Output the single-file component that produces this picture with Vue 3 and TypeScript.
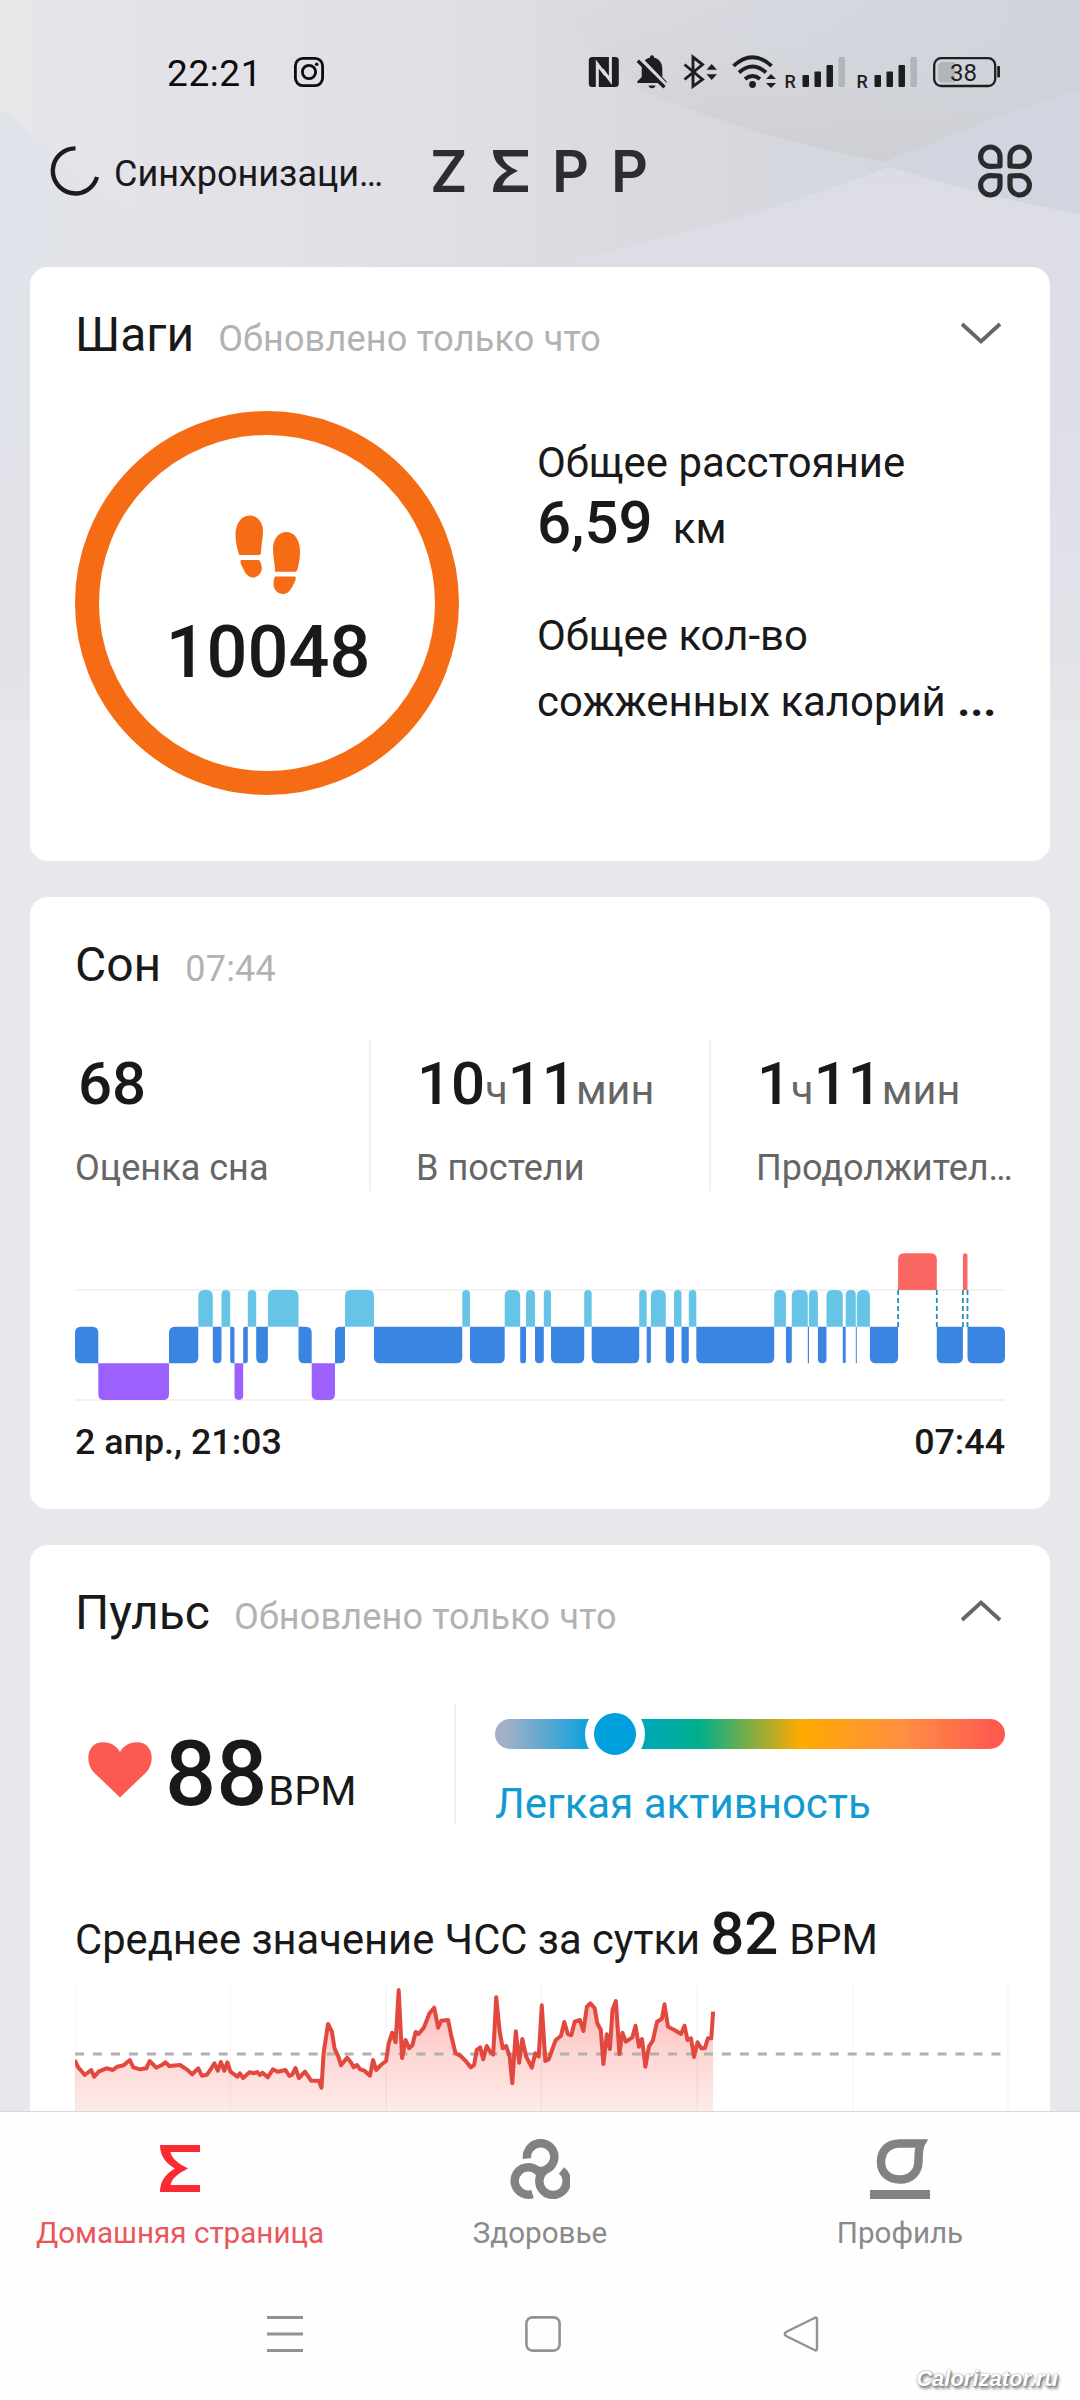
<script setup lang="ts">
type Stage = 'awake' | 'rem' | 'light' | 'deep'

interface Segment {
  stage: Stage
  end: number
}

const stageOrder: Stage[] = ['awake', 'rem', 'light', 'deep']
const stageColor: Record<Stage, string> = {
  awake: '#fb6762',
  rem: '#66c5e7',
  light: '#3b85e2',
  deep: '#9b60fe',
}

const sleep: Segment[] = [
  { stage: 'light', end: 98.3 }, { stage: 'deep', end: 169 }, { stage: 'light', end: 198.3 },
  { stage: 'rem', end: 212.8 }, { stage: 'light', end: 221.5 }, { stage: 'rem', end: 230.2 },
  { stage: 'light', end: 234.5 }, { stage: 'deep', end: 243.2 }, { stage: 'light', end: 247.8 },
  { stage: 'rem', end: 256.2 }, { stage: 'light', end: 267.9 }, { stage: 'rem', end: 298.5 },
  { stage: 'light', end: 311.7 }, { stage: 'deep', end: 335 }, { stage: 'light', end: 345 },
  { stage: 'rem', end: 374 }, { stage: 'light', end: 462.3 }, { stage: 'rem', end: 470 },
  { stage: 'light', end: 504.7 }, { stage: 'rem', end: 520.2 }, { stage: 'light', end: 526 },
  { stage: 'rem', end: 535 }, { stage: 'light', end: 543.8 }, { stage: 'rem', end: 551 },
  { stage: 'light', end: 584.2 }, { stage: 'rem', end: 591.7 }, { stage: 'light', end: 639.2 },
  { stage: 'rem', end: 646.7 }, { stage: 'light', end: 650.9 }, { stage: 'rem', end: 665.8 },
  { stage: 'light', end: 674 }, { stage: 'rem', end: 681.5 }, { stage: 'light', end: 688.8 },
  { stage: 'rem', end: 696.3 }, { stage: 'light', end: 774.2 }, { stage: 'rem', end: 785.9 },
  { stage: 'light', end: 791.8 }, { stage: 'rem', end: 807.8 }, { stage: 'light', end: 809 },
  { stage: 'rem', end: 817.9 }, { stage: 'light', end: 826.5 }, { stage: 'rem', end: 842.8 },
  { stage: 'light', end: 845.7 }, { stage: 'rem', end: 855.8 }, { stage: 'light', end: 856.8 },
  { stage: 'rem', end: 869.9 }, { stage: 'light', end: 898.1 }, { stage: 'awake', end: 936.8 },
  { stage: 'light', end: 962.9 }, { stage: 'awake', end: 967.5 }, { stage: 'light', end: 1005 },
]

const rowH = 110 / 3

/* A corner stays square where the neighbouring block touches it. */
const blocks = sleep.map((s, i) => {
  const x0 = i ? sleep[i - 1].end : 75
  const x1 = s.end
  const row = stageOrder.indexOf(s.stage)
  const prev = i ? stageOrder.indexOf(sleep[i - 1].stage) : row
  const next = i < sleep.length - 1 ? stageOrder.indexOf(sleep[i + 1].stage) : row
  const r = Math.min(6, (x1 - x0) / 2)
  const tl = prev < row ? 0 : r
  const bl = prev > row ? 0 : r
  const tr = next < row ? 0 : r
  const br = next > row ? 0 : r
  const y0 = 1253.3 + row * rowH
  const y1 = y0 + rowH
  const d =
    `M${x0 + tl} ${y0}H${x1 - tr}Q${x1} ${y0} ${x1} ${y0 + tr}V${y1 - br}` +
    `Q${x1} ${y1} ${x1 - br} ${y1}H${x0 + bl}Q${x0} ${y1} ${x0} ${y1 - bl}V${y0 + tl}` +
    `Q${x0} ${y0} ${x0 + tl} ${y0}Z`
  return { d, fill: stageColor[s.stage] }
})

const jumps = [898.1, 936.8, 962.9, 967.5]

const samples = [
  57, 300, 65, 322, 80, 345, 95, 330, 102, 350, 112, 335, 130, 325, 145, 330, 155, 320, 170, 316, 184, 300, 192, 322,
  208, 328, 222, 325, 230, 303, 245, 323, 258, 315, 266, 307, 275, 318, 300, 315, 315, 328, 328, 343, 342, 325, 350, 347,
  362, 344, 372, 325, 379, 310, 387, 332, 394, 306, 402, 332, 409, 307, 416, 335, 432, 350, 438, 340, 445, 354, 460, 337,
  470, 340, 478, 336, 484, 345, 490, 338, 502, 352, 514, 328, 525, 335, 543, 330, 552, 348, 558, 345, 566, 324, 574, 354,
  588, 335, 602, 362, 620, 362, 626, 383, 631, 280, 641, 192, 650, 215, 656, 265, 665, 290, 671, 316, 685, 293, 693, 305,
  700, 322, 708, 315, 715, 328, 725, 332, 738, 347, 745, 300, 752, 330, 763, 315, 775, 303, 781, 250, 789, 218, 797, 247,
  804, 90, 812, 294, 820, 240, 828, 265, 836, 255, 843, 216, 850, 222, 862, 203, 875, 160, 886, 143, 895, 203, 902, 182,
  918, 180, 925, 225, 935, 280, 947, 288, 960, 305, 970, 322, 978, 315, 984, 270, 992, 262, 999, 298, 1007, 258, 1015, 275,
  1022, 284, 1029, 112, 1037, 215, 1044, 265, 1052, 258, 1060, 290, 1066, 370, 1074, 214, 1082, 308, 1089, 237, 1098, 290,
  1111, 323, 1119, 280, 1127, 290, 1134, 136, 1142, 303, 1150, 298, 1166, 240, 1178, 228, 1186, 186, 1194, 222, 1202, 226,
  1210, 185, 1222, 180, 1230, 213, 1238, 140, 1246, 130, 1256, 145, 1262, 190, 1270, 210, 1276, 312, 1284, 223, 1291, 267,
  1297, 150, 1305, 123, 1313, 282, 1320, 218, 1328, 245, 1343, 232, 1350, 197, 1358, 260, 1365, 237, 1373, 320, 1381, 260,
  1390, 242, 1400, 185, 1411, 176, 1417, 133, 1425, 200, 1440, 210, 1455, 222, 1463, 197, 1470, 240, 1478, 235, 1485, 291,
  1493, 247, 1502, 265, 1510, 265, 1517, 235, 1525, 235, 1529, 155,
]

const points: string[] = []
for (let i = 0; i < samples.length; i += 2) {
  points.push(`${(samples[i] * 0.43367 + 50).toFixed(1)},${(samples[i + 1] / 3 + 1960).toFixed(1)}`)
}
const pulseLine = `M${points.join('L')}`
const pulseArea = `${pulseLine}V2112H74.7Z`
const gridX = [75, 230.3, 386, 541.5, 697, 852.7, 1008]
</script>

<template>
  <div class="phone">
    <svg class="backdrop" width="1080" height="720" viewBox="0 0 1080 720">
      <defs>
        <linearGradient id="bgMain" x1="0" y1="0" x2="1" y2="0">
          <stop offset="0" stop-color="#e7e7e9" />
          <stop offset=".12" stop-color="#e4e3ea" />
          <stop offset=".4" stop-color="#dfdfe5" />
          <stop offset=".6" stop-color="#d9dae0" />
          <stop offset="1" stop-color="#cfd3db" />
        </linearGradient>
        <linearGradient id="bgWedge" x1="0" y1="0" x2="0" y2="1">
          <stop offset="0" stop-color="#d2d5dc" stop-opacity="0" />
          <stop offset="1" stop-color="#cecfd4" />
        </linearGradient>
        <linearGradient id="bgLow" x1="0" y1="160" x2="0" y2="720" gradientUnits="userSpaceOnUse">
          <stop offset="0" stop-color="#dcdce4" />
          <stop offset=".45" stop-color="#dedee9" />
          <stop offset="1" stop-color="#e4e4e9" />
        </linearGradient>
        <linearGradient id="bgLeft" x1="0" y1="0" x2="1" y2="0">
          <stop offset="0" stop-color="#dfe3ea" />
          <stop offset="1" stop-color="#e3e3e8" stop-opacity="0" />
        </linearGradient>
        <linearGradient id="bgEdge" x1="0" y1="0" x2="0" y2="1">
          <stop offset="0" stop-color="#e1e3eb" />
          <stop offset="1" stop-color="#e3e4e9" />
        </linearGradient>
      </defs>
      <rect width="1080" height="720" fill="url(#bgMain)" />
      <path d="M540 0H1080V90Q960 130 885 162Q760 140 640 90Z" fill="url(#bgWedge)" />
      <path d="M885 164Q980 120 1080 90V215Z" fill="#d2d5df" />
      <path d="M540 266Q740 225 889 167Q980 195 1080 214V720H540Z" fill="url(#bgLow)" />
      <path d="M0 108L110 200L260 267H0Z" fill="url(#bgLeft)" />
      <rect y="262" width="60" height="458" fill="url(#bgEdge)" />
    </svg>

    <div class="scroll">
      <div class="status">
        <span class="clock">22:21</span>
        <svg class="insta" width="30" height="30" viewBox="0 0 30 30" fill="none" stroke="#0c0c0d" stroke-width="2.8">
          <rect x="1.4" y="1.4" width="27.2" height="27.2" rx="7.5" />
          <circle cx="15" cy="15" r="6.6" />
          <circle cx="22.7" cy="7.3" r="1.8" fill="#0c0c0d" stroke="none" />
        </svg>
        <svg class="tray" width="412" height="36" viewBox="588 54 412 36">
          <g fill="#1d1e20">
            <rect x="588.8" y="57" width="30" height="30" rx="3.5" />
            <path d="M652 55.2C653.5 55.2 654 56.5 654 57.5C660 59 662.3 64 662.3 69V77L666.5 81.5V83H637.3V81.5L641.7 77V69C641.7 64 644 59 650 57.5C650 56.5 650.5 55.2 652 55.2Z" />
            <path d="M648.5 85.5H655.5Q654.8 88.3 652 88.3T648.5 85.5Z" />
          </g>
          <path d="M597.3 87.5V64L605.5 75M610.4 57V80.5L602.2 69.5" fill="none" stroke="#dcdde2" stroke-width="3" />
          <path d="M640 58L668 87" stroke="#d7d8df" stroke-width="3.6" />
          <path d="M637.8 60.8L664.5 87.2" stroke="#1d1e20" stroke-width="3.4" />
          <path d="M684.5 64.5L702.5 79.5L693 86.5V57L702.5 64.5L684.5 79.5" fill="none" stroke="#1d1e20" stroke-width="2.9" />
          <path d="M706.5 69.8L711.7 64L717 69.8ZM706.5 74.3H717L711.7 80Z" fill="#1d1e20" />
          <g fill="none" stroke="#1d1e20" stroke-width="3.8">
            <path d="M733.5 65.8Q752.5 48.5 771.5 65.8" />
            <path d="M739 72.5Q752.5 60.5 766 72.5" />
            <path d="M745 79Q752.5 73 760 79" />
          </g>
          <circle cx="752.5" cy="84.5" r="3.4" fill="#1d1e20" />
          <path d="M766 79L771 74L776 79ZM766 83H776L771 88Z" fill="#1d1e20" />
          <text x="784.5" y="88" class="roam">R</text>
          <text x="856.5" y="88" class="roam">R</text>
          <g fill="#1d1e20">
            <rect x="802.5" y="75" width="6.5" height="12" rx="1" />
            <rect x="814.5" y="71.5" width="6.5" height="15.5" rx="1" />
            <rect x="826.5" y="65" width="6.5" height="22" rx="1" />
            <rect x="874.5" y="75" width="6.5" height="12" rx="1" />
            <rect x="886.5" y="71.5" width="6.5" height="15.5" rx="1" />
            <rect x="898.5" y="65" width="6.5" height="22" rx="1" />
          </g>
          <rect x="838.5" y="57" width="6.5" height="30" rx="1" fill="#b3b4b9" />
          <rect x="910.5" y="57" width="6.5" height="30" rx="1" fill="#b3b4b9" />
          <rect x="934.2" y="58.2" width="61" height="27.8" rx="7" fill="none" stroke="#1d1e20" stroke-width="2.3" />
          <path d="M943 62H955V82.5H943Q938 82.5 938 77.5V67Q938 62 943 62Z" fill="#b3b4b9" />
          <rect x="997.2" y="66" width="2.8" height="11.5" rx="1" fill="#1d1e20" />
          <text x="950" y="80.8" class="level">38</text>
        </svg>
      </div>

      <header class="topbar">
        <div class="sync">
          <svg width="50" height="50" viewBox="0 0 50 50" fill="none">
            <path d="M25.5 2.4A22.5 22.5 0 1 0 47 31" stroke="#1b1b1d" stroke-width="4.4" />
          </svg>
          <span>Синхронизаци…</span>
        </div>
        <div class="brand">
          <span>Z</span>
          <svg width="35" height="42" viewBox="0 0 35 42"><path d="M0 0H35V6.5H9.5C11 14 18 17.5 25 21C18 24.5 11 28 9.5 35.5H35V42H0C0 32 5.5 26 14 21C5.5 16 0 10 0 0Z" fill="#2c2d2e" /></svg>
          <span>P</span>
          <span>P</span>
        </div>
        <svg class="apps" width="54" height="54" viewBox="0 0 54 54" fill="none" stroke="#2a2b2d" stroke-width="5.2">
          <path d="M22 22V13A9.7 9.7 0 1 0 12.5 22.4Z" stroke-linejoin="round" />
          <path d="M32 22V13A9.7 9.7 0 1 1 41.5 22.4Z" stroke-linejoin="round" />
          <path d="M22 32V41A9.7 9.7 0 1 1 12.5 31.6Z" stroke-linejoin="round" />
          <path d="M32 32V41A9.7 9.7 0 1 0 41.5 31.6Z" stroke-linejoin="round" />
        </svg>
      </header>

      <section class="card steps">
        <div class="head">
          <h2>Шаги</h2>
          <span>Обновлено только что</span>
          <svg width="44" height="26" viewBox="0 0 44 26" fill="none"><path d="M3 3L22 20.5L41 3" stroke="#666" stroke-width="3.8" /></svg>
        </div>
        <div class="steps-body">
          <div class="ring">
            <svg width="66" height="80" viewBox="0 0 66 80" fill="#f66c14">
              <path d="M4 39.5C2 33 .5 27 .5 20C.5 9 6 .5 14.5 .5S28 8 28 16C28 24 26 31 26 37Q26 40 24 40L5.5 40Q4.5 40 4 39.5Z" />
              <path d="M6 45H24Q26.8 48 26.8 52.5C26.8 58 23 62.5 18 62.5C11 62.5 8.5 54 6 49Q5 46.5 6 45Z" />
              <path d="M40 56.5C40 50 38 40 38 34C38 24 43.5 17 51.5 17S65 25 65 36C65 43 64 50 62 55.5Q61.5 56.7 60 56.7H41Q40 56.7 40 56.5Z" />
              <path d="M40 61.5H60Q61.3 62 60.3 65.5C57.5 71 55 79 48 79C43 79 38.5 75 38.5 68.5Q38.5 64 40 61.5Z" />
            </svg>
            <strong>10048</strong>
          </div>
          <div class="totals">
            <p>Общее расстояние</p>
            <div class="distance"><b>6,59</b><span>км</span></div>
            <p class="calories">Общее кол-во<br />сожженных калорий <b>...</b></p>
          </div>
        </div>
      </section>

      <section class="card sleep">
        <div class="head">
          <h2>Сон</h2>
          <span>07:44</span>
        </div>
        <div class="stats">
          <div>
            <div class="value first"><b>68</b></div>
            <div class="label">Оценка сна</div>
          </div>
          <div>
            <div class="value"><b>10</b>ч<b>11</b>мин</div>
            <div class="label">В постели</div>
          </div>
          <div>
            <div class="value"><b>1</b>ч<b>11</b>мин</div>
            <div class="label">Продолжител…</div>
          </div>
        </div>
        <svg class="stages" width="930" height="149" viewBox="75 1253 930 149">
          <path d="M75 1290H1005M75 1400H1005" stroke="#f2f2f2" stroke-width="2" />
          <path v-for="(b, i) in blocks" :key="i" :d="b.d" :fill="b.fill" />
          <path v-for="x in jumps" :key="x" :d="`M${x} 1290V1327`" stroke="#2a90bd" stroke-width="1.8" stroke-dasharray="5 3" />
        </svg>
        <div class="range"><span>2 апр., 21:03</span><span>07:44</span></div>
      </section>

      <section class="card pulse">
        <div class="head">
          <h2>Пульс</h2>
          <span>Обновлено только что</span>
          <svg width="44" height="26" viewBox="0 0 44 26" fill="none"><path d="M3 21L22 3.5L41 21" stroke="#666" stroke-width="3.8" /></svg>
        </div>
        <div class="now">
          <div class="bpm">
            <svg width="66" height="56" viewBox="0 0 66 56"><path d="M33 55.5L7 30.5C-2.5 20.5 -.5 .5 16 .3C25 .3 30 5 33 10C36 5 41 .3 50 .3C66.5 .5 68.5 20.5 59 30.5Z" fill="#fb5a52" /></svg>
            <b>88</b><span>BPM</span>
          </div>
          <div class="zone">
            <div class="scale"><i></i></div>
            <p>Легкая активность</p>
          </div>
        </div>
        <div class="average"><span>Среднее значение ЧСС за сутки</span><b>82</b><span>BPM</span></div>
        <svg class="trace" width="945" height="127" viewBox="75 1985 945 127">
          <defs>
            <linearGradient id="pulseFill" x1="0" y1="1990" x2="0" y2="2112" gradientUnits="userSpaceOnUse">
              <stop offset="0" stop-color="#fbb5b1" />
              <stop offset=".5" stop-color="#fdd5d3" />
              <stop offset="1" stop-color="#fdebea" />
            </linearGradient>
          </defs>
          <path :d="pulseArea" fill="url(#pulseFill)" />
          <path v-for="x in gridX" :key="x" :d="`M${x} 1985V2112`" stroke="#000" stroke-opacity=".045" stroke-width="1.3" />
          <path d="M75 2054H1003" stroke="#b0b0b0" stroke-width="3" stroke-dasharray="9 8.97" />
          <path :d="pulseLine" fill="none" stroke="#e3483f" stroke-width="4" stroke-linejoin="round" />
        </svg>
      </section>
    </div>

    <nav class="tabs">
      <div class="tab active">
        <svg width="60" height="60" viewBox="0 0 60 60"><path d="M10 6H50V13H20.5C22 21 30 25 38 29.5C30 34 22 38 20.5 46H50V53H10C10 42 16 34.5 25 29.5C16 24.5 10 17 10 6Z" fill="#fb2b33" /></svg>
        <span>Домашняя страница</span>
      </div>
      <div class="tab">
        <svg width="60" height="60" viewBox="0 0 60 60" fill="none" stroke="#828282" stroke-width="8.5">
          <path d="M17 19.5A13.7 13.7 0 1 1 37 30A13.7 13.7 0 1 0 51.5 31.5" />
          <path d="M30.5 35.5A13.7 13.7 0 1 0 22.5 55" />
          <path d="M24 30.5L36 30" stroke-width="5" />
        </svg>
        <span>Здоровье</span>
      </div>
      <div class="tab">
        <svg width="60" height="60" viewBox="0 0 60 60">
          <path d="M49.5 4.5H30C18 4.5 11 12 11 23C11 34 19 40.5 30 40.5S48.5 33 48.5 22C48.5 15 48.5 9 51 4.5Z" fill="none" stroke="#828282" stroke-width="8.5" />
          <rect y="51" width="60" height="9" fill="#828282" />
        </svg>
        <span>Профиль</span>
      </div>
    </nav>

    <div class="system">
      <svg width="36" height="38" viewBox="0 0 36 38"><path d="M0 2.5H36M0 19H36M0 35.5H36" stroke="#929292" stroke-width="3" /></svg>
      <svg width="36" height="38" viewBox="0 0 36 38" fill="none"><rect x="1.4" y="2.4" width="33.2" height="33.2" rx="6" stroke="#929292" stroke-width="2.6" /></svg>
      <svg width="36" height="38" viewBox="0 0 36 38" fill="none"><path d="M31.5 3Q34 1.5 34 5V33Q34 36.5 31.5 35L3 21Q.5 19 3 17Z" stroke="#929292" stroke-width="2.4" stroke-linejoin="round" /></svg>
    </div>

    <div class="watermark">Calorizator.ru</div>
  </div>
</template>

<style>
body {
  margin: 0;
}
</style>

<style scoped>
.phone {
  position: relative;
  width: 1080px;
  height: 2400px;
  display: flex;
  flex-direction: column;
  overflow: hidden;
  background: #e7e8ec;
  color: #191919;
  font-family: Roboto, "Liberation Sans", sans-serif;
}
.backdrop {
  position: absolute;
  left: 0;
  top: 0;
}
svg {
  display: block;
  flex: none;
}
h2,
p {
  margin: 0;
  font-weight: 400;
}
b,
strong {
  font-weight: 500;
}
.scroll {
  position: relative;
  height: 2111px;
  flex: none;
  overflow: hidden;
}
.status {
  display: flex;
  align-items: center;
  height: 144px;
  padding: 0 80px 0 167px;
}
.clock {
  width: 127px;
  padding-top: 3px;
  font-size: 37px;
  line-height: 44px;
  letter-spacing: 0.6px;
  color: #0c0c0d;
}
.tray {
  margin-left: auto;
  overflow: visible;
}
.roam {
  font: 500 18px Roboto, sans-serif;
  fill: #1d1e20;
}
.level {
  font: 400 24px Roboto, sans-serif;
  fill: #1d1e20;
}
.topbar {
  display: grid;
  grid-template-columns: 432px 219px 1fr;
  align-items: center;
  height: 54px;
  margin-bottom: 69px;
}
.sync {
  display: flex;
  align-items: center;
  gap: 14px;
  padding-left: 50px;
}
.sync span {
  padding-top: 5px;
  font-size: 36px;
  line-height: 44px;
  white-space: nowrap;
}
.brand {
  display: flex;
  align-items: center;
}
.brand span {
  flex: none;
  width: 60px;
  margin-left: -1px;
  font-family: Inter, sans-serif;
  font-size: 57.5px;
  font-weight: 600;
  line-height: 54px;
  color: #2c2d2e;
}
.brand svg {
  margin: 0 25px 0 2px;
}
.brand span:first-child {
  width: 61px;
  margin-left: -2px;
}
.brand span:last-child {
  width: 40px;
}
.apps {
  justify-self: end;
  margin-right: 48px;
}
.card {
  box-sizing: border-box;
  margin: 0 30px 36px;
  padding: 40px 45px 0;
  border-radius: 18px;
  background: #fff;
}
.head {
  display: flex;
  align-items: baseline;
  gap: 24px;
  height: 56px;
}
.head h2 {
  font-size: 48px;
  line-height: 56px;
}
.head span {
  font-size: 36px;
  line-height: 44px;
  letter-spacing: 0.2px;
  color: #b2b2b2;
}
.head svg {
  align-self: flex-start;
  margin: 14px 2px 0 auto;
}
.steps {
  height: 594px;
}
.steps-body {
  display: flex;
  gap: 78px;
  margin-top: 48px;
}
.ring {
  box-sizing: border-box;
  display: flex;
  flex-direction: column;
  align-items: center;
  width: 384px;
  height: 384px;
  padding: 80px 0 0 2px;
  border: 24px solid #f66c14;
  border-radius: 50%;
}
.ring strong {
  margin-top: 16px;
  font-size: 72px;
  line-height: 84px;
}
.totals {
  padding-top: 28px;
  font-size: 41.9px;
  white-space: nowrap;
}
.totals p {
  line-height: 48px;
}
.distance {
  display: flex;
  align-items: baseline;
  gap: 20px;
  height: 60px;
  margin-top: 6px;
}
.distance b {
  font-size: 60px;
  line-height: 60px;
}
.totals .calories {
  margin-top: 50px;
  line-height: 66px;
}
.calories b {
  margin-left: 1px;
  font-weight: 700;
  font-size: 45px;
  line-height: 1;
}
.sleep {
  height: 612px;
}
.stats {
  display: grid;
  grid-template-columns: 294px 340px 1fr;
  height: 151px;
  margin: 47px -45px 0 0;
}
.stats > div {
  padding-top: 14px;
  white-space: nowrap;
}
.stats > div + div {
  border-left: 2px solid #efefef;
  padding-left: 45px;
}
.value {
  display: flex;
  align-items: baseline;
  height: 60px;
  padding-left: 1px;
  font-size: 41.4px;
  line-height: 48px;
  color: #666;
}
.value.first {
  padding-left: 3px;
}
.value b {
  font-size: 60px;
  line-height: 60px;
  color: #191919;
}
.label {
  margin-top: 32px;
  font-size: 36.1px;
  line-height: 44px;
  color: #666;
}
.stages {
  margin-top: 62px;
}
.range {
  display: flex;
  justify-content: space-between;
  margin-top: 18px;
  font-size: 35.8px;
  font-weight: 500;
  line-height: 44px;
}
.pulse {
  height: 700px;
}
.now {
  display: flex;
  height: 120px;
  margin-top: 63px;
}
.bpm {
  box-sizing: border-box;
  display: flex;
  align-items: baseline;
  width: 381px;
  padding: 18px 0 0 12px;
  border-right: 2px solid #efefef;
}
.bpm svg {
  align-self: flex-start;
  margin: 20px 12px 0 0;
}
.bpm b {
  font-size: 90px;
  line-height: 106px;
}
.bpm span {
  margin-left: 1px;
  font-size: 41.5px;
}
.zone {
  flex: 1;
  padding: 15px 0 0 39px;
}
.scale {
  position: relative;
  height: 30px;
  border-radius: 15px;
  background: linear-gradient(90deg, #a3afc8 2%, #009fdd 20%, #00b08c 40%, #ffaa00 60%, #ff8f42 80%, #ff5a50 98%);
}
.scale i {
  position: absolute;
  left: 90px;
  top: -15px;
  width: 42px;
  height: 42px;
  border: 9px solid #fff;
  border-radius: 50%;
  background: #009fdd;
}
.zone p {
  margin-top: 31px;
  font-size: 42px;
  line-height: 48px;
  color: #119bd0;
}
.average {
  display: flex;
  align-items: baseline;
  height: 70px;
  margin-top: 75px;
  font-size: 41.7px;
  line-height: 48px;
  white-space: nowrap;
}
.average b {
  margin: 0 11px 0 10px;
  font-size: 60px;
  line-height: 70px;
}
.trace {
  margin-top: 16px;
}
.tabs {
  position: relative;
  box-sizing: border-box;
  display: grid;
  grid-template-columns: repeat(3, 1fr);
  height: 149px;
  flex: none;
  padding-top: 27px;
  border-top: 1px solid #d9d9db;
  background: #fefefe;
}
.tab {
  display: flex;
  flex-direction: column;
  align-items: center;
  color: #8a8a8a;
}
.tab span {
  margin-top: 16px;
  font-size: 29.6px;
  line-height: 36px;
  white-space: nowrap;
}
.tab.active {
  color: #e9565b;
}
.system {
  position: relative;
  display: flex;
  justify-content: space-between;
  flex: 1;
  padding: 55px 261px 0 267px;
  background: #fefefe;
}
.watermark {
  position: absolute;
  right: 22px;
  bottom: 9px;
  font: italic 700 22px/24px "Liberation Sans", sans-serif;
  color: #fff;
  text-shadow: 1px 1px 2px #777, 0 0 2px #999, 2px 3px 3px #999;
}
</style>
